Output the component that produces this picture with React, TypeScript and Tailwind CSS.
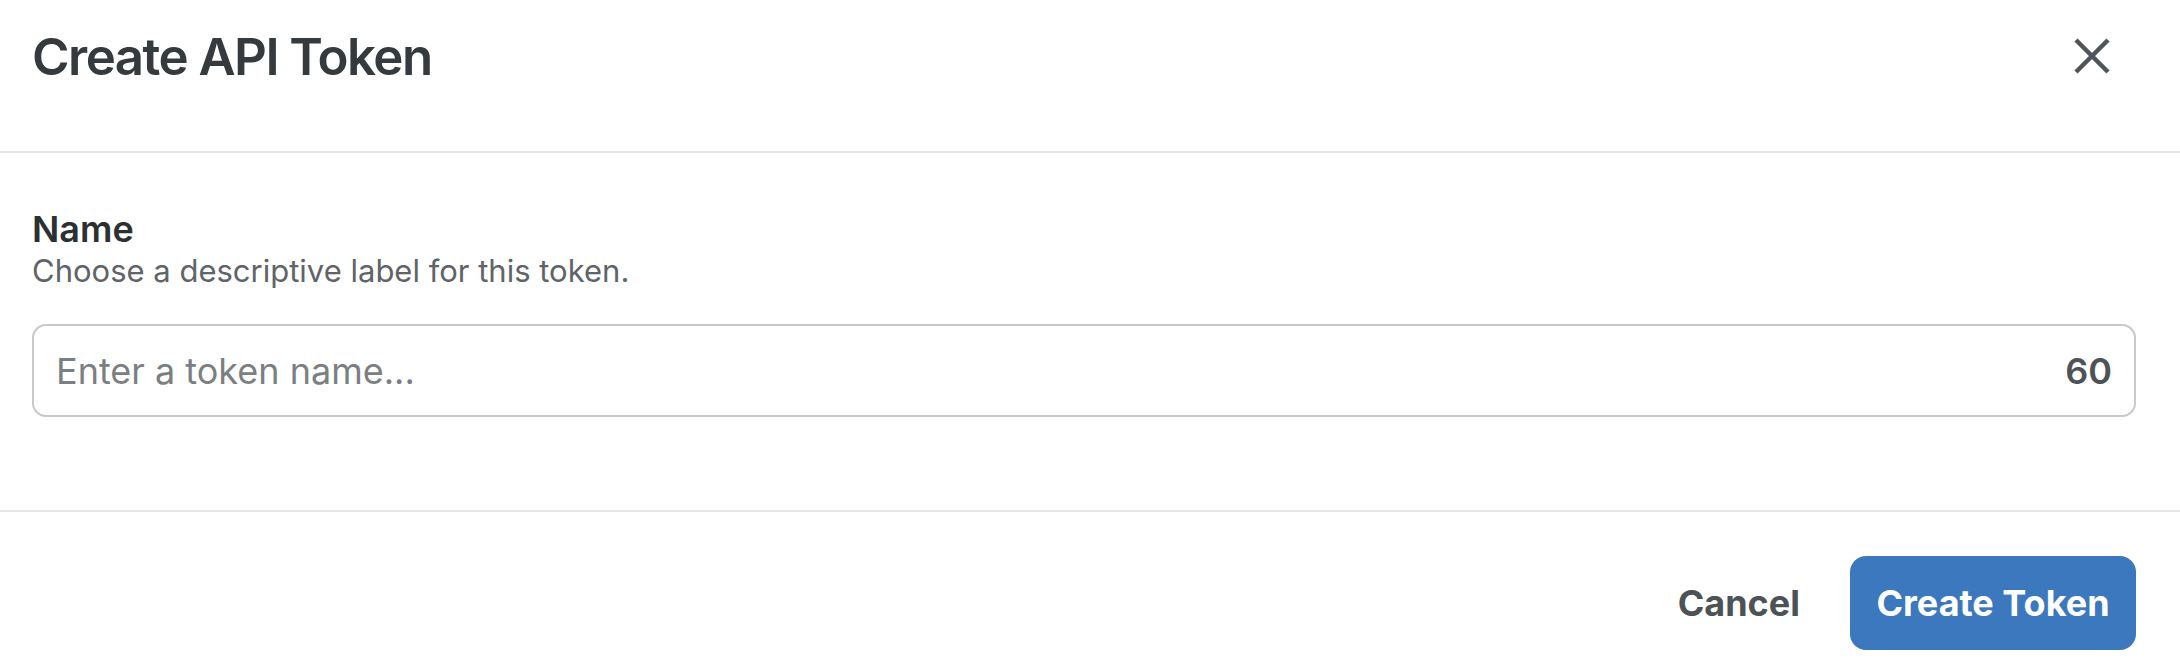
import { useState } from "react"

/* palette: text #343a3d · muted #5f6468 · border #c6c8c9 · divider #e4e5e6 · accent #3b78bd */

function CloseIcon() {
  return (
    <svg width="36" height="36" viewBox="0 0 36 36" fill="none" aria-hidden="true">
      <path d="M2 2L34 34M34 2L2 34" stroke="currentColor" strokeWidth="4.5" />
    </svg>
  )
}

export default function App() {
  const [name, setName] = useState("")
  const max = 60

  return (
    <div className="h-[666px] w-full overflow-hidden bg-white font-['Inter','Liberation_Sans',sans-serif] text-[#343a3d]">
      {/* Header */}
      <header className="flex h-[153px] items-start justify-between border-b-2 border-[#e4e5e6] pl-[32px] pr-[70px] pt-[31px]">
        <h1 className="text-[51px] font-semibold leading-none tracking-[-0.03em]">Create API Token</h1>
        <button type="button" className="mt-[7px] text-[#4f5558]" aria-label="Close">
          <CloseIcon />
        </button>
      </header>

      {/* Body */}
      <section className="border-b-2 border-[#e4e5e6] pb-[93px] pl-[32px] pr-[44px] pt-[54px]">
        <label htmlFor="token-name" className="block text-[36px] font-semibold leading-[44px] text-[#2c3033]">
          Name
        </label>
        <p className="text-[31px] leading-[40px] text-[#5f6468]">Choose a descriptive label for this token.</p>
        <div className="mt-[33px] flex h-[93px] items-center rounded-[14px] border-2 border-[#c6c8c9] pl-[22px] pr-[22px]">
          <input
            id="token-name"
            type="text"
            value={name}
            maxLength={max}
            onChange={(e) => setName(e.target.value)}
            placeholder="Enter a token name..."
            className="min-w-0 flex-1 bg-transparent text-[36px] text-[#343a3d] outline-none placeholder:text-[#7b7f82]"
          />
          <span className="text-[36px] font-semibold text-[#4d5357]">{max - name.length}</span>
        </div>
      </section>

      {/* Footer */}
      <footer className="flex items-start justify-end gap-[26px] pr-[44px] pt-[44px]">
        <button type="button" className="flex h-[94px] items-center px-[24px] text-[36px] font-bold text-[#4c5256]">
          Cancel
        </button>
        <button
          type="button"
          className="flex h-[94px] w-[286px] items-center justify-center rounded-[16px] bg-[#3b78bd] text-[36px] font-bold text-white"
        >
          Create Token
        </button>
      </footer>
    </div>
  )
}
